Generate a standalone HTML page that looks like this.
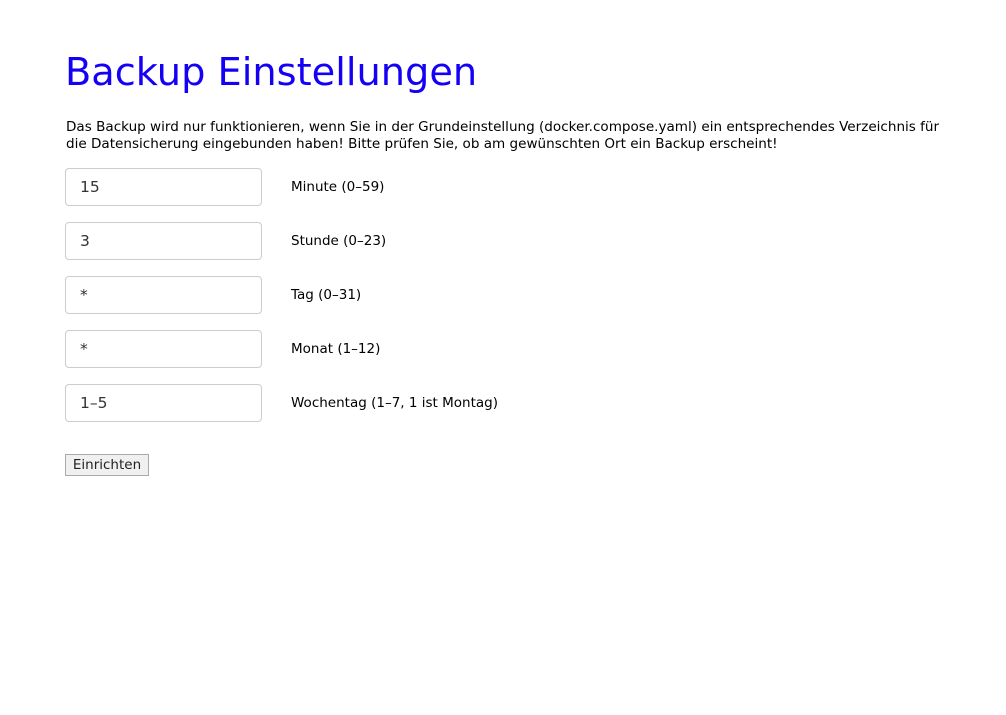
<!DOCTYPE html>
<html><head><meta charset="utf-8"><style>
body{margin:0;width:1006px;height:715px;background:#fff;font-family:"DejaVu Sans","Liberation Sans",sans-serif;color:#000;position:relative;overflow:hidden}
h1{position:absolute;left:65px;top:50px;margin:0;font-weight:normal;font-size:38.3px;color:#1400f5;white-space:nowrap}
p{position:absolute;left:66px;top:119px;margin:0;font-size:13.55px;line-height:17px;width:940px;white-space:nowrap}
.in{position:absolute;left:65px;height:36px;border:1px solid #ccc;border-radius:4px;font-size:15.5px;line-height:36px;padding-left:14px;color:#333;width:181px}
.lb{position:absolute;left:291px;font-size:13.5px;line-height:18px}
.btn{position:absolute;left:65px;top:454px;width:82px;height:20px;border:1px solid #aaa;background:#f0f0f0;font-size:13.5px;line-height:20px;text-align:center;color:#222}
</style></head><body>
<h1>Backup Einstellungen</h1>
<p>Das Backup wird nur funktionieren, wenn Sie in der Grundeinstellung (docker.compose.yaml) ein entsprechendes Verzeichnis für<br>die Datensicherung eingebunden haben! Bitte prüfen Sie, ob am gewünschten Ort ein Backup erscheint!</p>
<div class="in" style="top:168px">15</div><div class="lb" style="top:178px">Minute (0–59)</div>
<div class="in" style="top:222px">3</div><div class="lb" style="top:232px">Stunde (0–23)</div>
<div class="in" style="top:276px">*</div><div class="lb" style="top:286px">Tag (0–31)</div>
<div class="in" style="top:330px">*</div><div class="lb" style="top:340px">Monat (1–12)</div>
<div class="in" style="top:384px">1–5</div><div class="lb" style="top:394px">Wochentag (1–7, 1 ist Montag)</div>
<div class="btn">Einrichten</div>
</body></html>
